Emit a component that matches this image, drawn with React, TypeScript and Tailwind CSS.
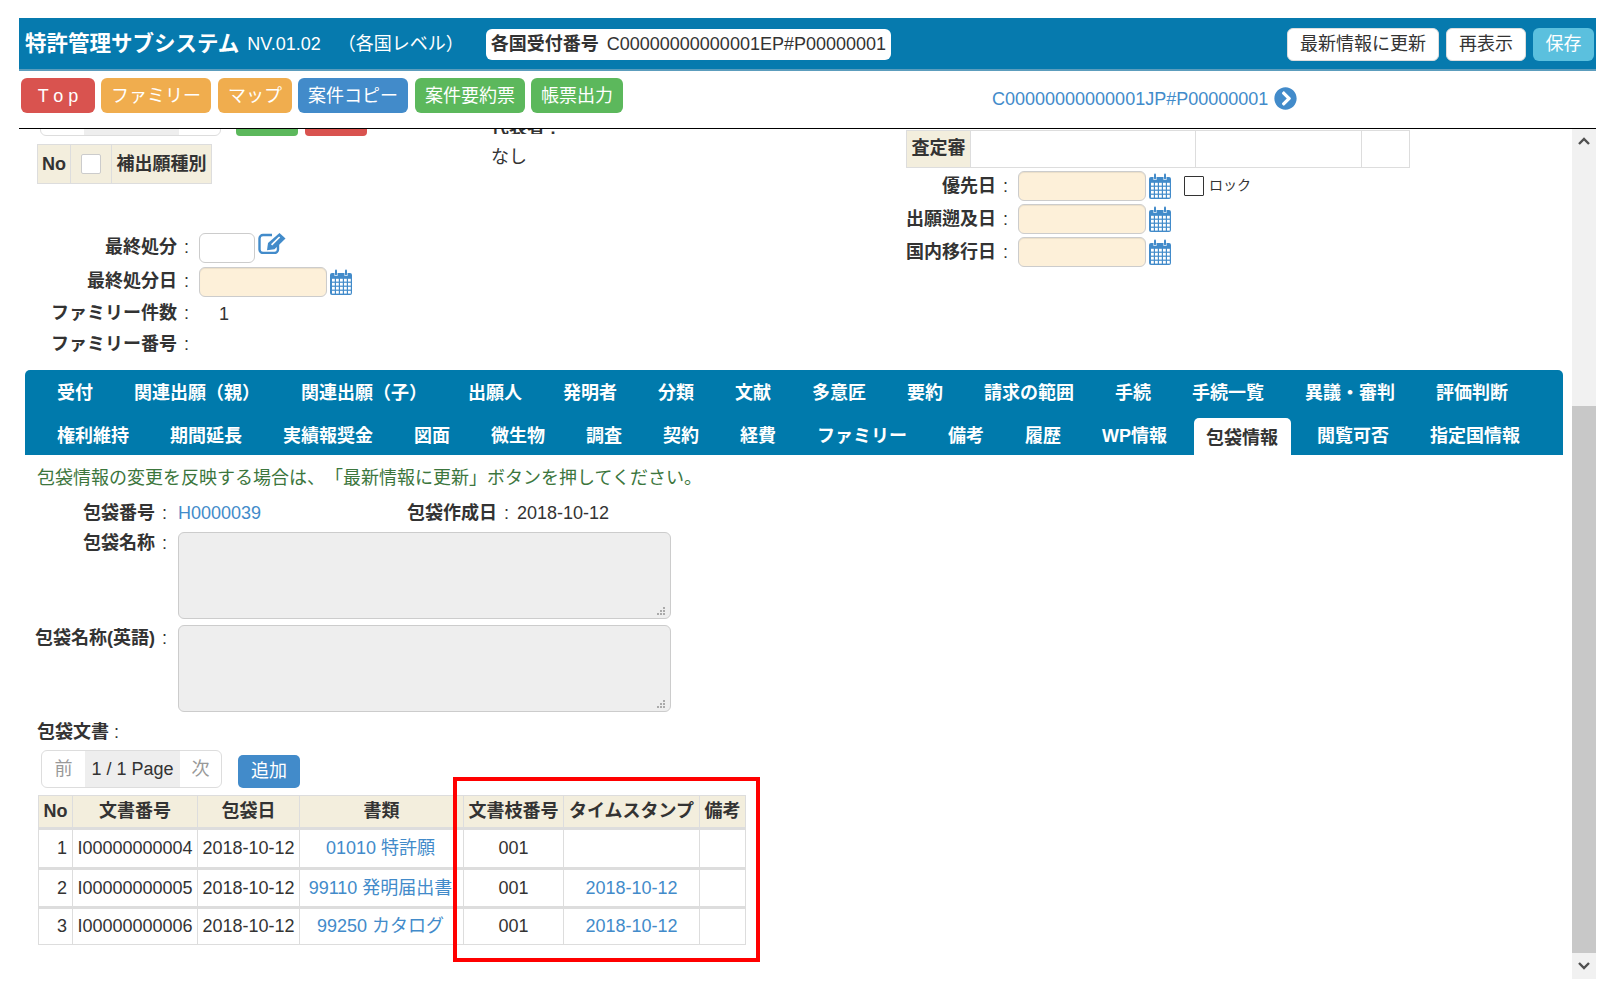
import React from "react";
import { FaChevronCircleRight } from "react-icons/fa";

const Cal = () => (
  <svg viewBox="0 0 22 26" className="w-[22px] h-[26px] shrink-0" aria-hidden>
    <path fill="#428bca" d="M2 4h2.5v3h3V4h7v3h3V4H20a2 2 0 0 1 2 2v18a2 2 0 0 1-2 2H2a2 2 0 0 1-2-2V6a2 2 0 0 1 2-2z" />
    <rect x="5" y="0.5" width="2" height="6" rx="1" fill="#428bca" />
    <rect x="15" y="0.5" width="2" height="6" rx="1" fill="#428bca" />
    <g fill="#fff">
      {[10, 14, 18, 22].map((y) =>
        [2, 6, 10, 14, 18].map((x) => <rect key={`${x}-${y}`} x={x} y={y - 0.2} width="2.8" height="2.8" />)
      )}
    </g>
  </svg>
);

const EditIcon = () => (
  <svg viewBox="0 0 28 22" className="ml-[3px] -mt-[10px] w-[28px] h-[22px] shrink-0" aria-hidden>
    <path d="M14 3H5A3.5 3.5 0 0 0 1.5 6.5v11A3.5 3.5 0 0 0 5 21h11.5a3.5 3.5 0 0 0 3.5-3.5V12" fill="none" stroke="#428bca" strokeWidth="2.4" />
    <path fill="#428bca" d="M21.5 1l6 5.6-11 10.6-7.5 1 1-7.2z" />
    <path fill="#fff" d="M21 4.4l1.2 1.1-8 7.9-1.2-1.1z" />
  </svg>
);

const Grip = () => (
  <svg viewBox="0 0 10 11" className="absolute right-[4px] bottom-[1px] w-[10px] h-[11px]" aria-hidden>
    <g fill="#aaa">
      {[[7, 1], [7, 4], [4, 4], [7, 7], [4, 7], [1, 7]].map(([x, y]) => <rect key={`${x}-${y}`} x={x} y={y} width="2" height="2" />)}
    </g>
  </svg>
);

const btn = "h-[35px] pt-[1px] rounded-[6px] flex items-center justify-center text-white text-[18px] shrink-0";

const DateInput = () => (
  <div className="w-[128px] h-[30px] rounded-[6px] bg-[#fdf0d9] border border-[#ccc] shadow-[inset_0_1px_1px_rgba(0,0,0,0.075)] shrink-0" />
);

const Lab = ({ w, children }: { w: string; children: React.ReactNode }) => (
  <div className={`${w} shrink-0 flex justify-end font-bold text-[#333] whitespace-nowrap`}>
    {children}
    <span className="ml-[7px] font-normal">:</span>
  </div>
);

const Tab = ({ children, active, top }: { children: React.ReactNode; active?: boolean; top?: boolean }) => (
  <div
    className={
      active
        ? "h-[37px] pl-[12px] pr-[13px] pt-[7px] -ml-[2px] -mr-[3px] mt-auto bg-white rounded-t-[5px] text-[#333] font-bold text-[18px] leading-[27px] whitespace-nowrap"
        : top
        ? "h-[37px] px-[12px] pt-[6px] text-white font-bold text-[18px] leading-[27px] whitespace-nowrap"
        : "h-[37px] px-[12px] pt-[5px] text-white font-bold text-[18px] leading-[27px] whitespace-nowrap"
    }
  >
    {children}
  </div>
);

const row1 = ["受付", "関連出願（親）", "関連出願（子）", "出願人", "発明者", "分類", "文献", "多意匠", "要約", "請求の範囲", "手続", "手続一覧", "異議・審判", "評価判断"];
const row2 = ["権利維持", "期間延長", "実績報奨金", "図面", "微生物", "調査", "契約", "経費", "ファミリー", "備考", "履歴", "WP情報", "包袋情報", "閲覧可否", "指定国情報"];

const th = "border border-[#ddd] border-b-[3px] bg-[#f3eedd] font-bold text-center text-[#333] p-0 h-[33px]";
const td = "border border-[#ddd] text-[#333] p-0 text-center whitespace-nowrap";
const link = "text-[#428bca]";

const rows = [
  { n: 1, id: "I00000000004", doc: "01010 特許願", ts: "" },
  { n: 2, id: "I00000000005", doc: "99110 発明届出書", ts: "2018-10-12" },
  { n: 3, id: "I00000000006", doc: "99250 カタログ", ts: "2018-10-12" },
];

export default function App() {
  return (
    <div className="w-[1620px] h-[1000px] bg-white overflow-hidden pt-[18px] pl-[19px] font-['Liberation_Sans','Noto_Sans_CJK_JP',sans-serif] text-[18px] text-[#333] [text-spacing-trim:space-all]">
      <div className="w-[1577px]">
        {/* header */}
        <div className="h-[53px] pt-[1px] bg-[#067aae] border-b-2 border-[#5c9dbd] flex items-center text-white">
          <div className="ml-[6px] text-[21.5px] font-bold whitespace-nowrap">特許管理サブシステム</div>
          <div className="ml-[8px] text-[18px] whitespace-nowrap">NV.01.02</div>
          <div className="ml-[17px] w-[148px] whitespace-nowrap">（各国レベル）</div>
          <div className="w-[405px] h-[31px] bg-white rounded-[6px] flex items-center text-[#333] pl-[5px] whitespace-nowrap">
            <span className="font-bold">各国受付番号</span>
            <span className="ml-[8px]">C00000000000001EP#P00000001</span>
          </div>
          <div className="ml-auto mr-[2px] flex gap-[7px]">
            <div className="w-[152px] h-[33px] bg-white rounded-[6px] border border-[#ddd] text-[#333] flex items-center justify-center">最新情報に更新</div>
            <div className="w-[80px] h-[33px] bg-white rounded-[6px] border border-[#ddd] text-[#333] flex items-center justify-center">再表示</div>
            <div className="w-[61px] h-[33px] bg-[#5bc0de] rounded-[6px] text-white flex items-center justify-center">保存</div>
          </div>
        </div>
        {/* toolbar */}
        <div className="h-[58px] border-b border-black flex pt-[7px] pl-[2px] relative">
          <div className={`${btn} w-[74px] bg-[#d9534f]`}>T o p</div>
          <div className={`${btn} ml-[6px] w-[110px] bg-[#f0ad4e]`}>ファミリー</div>
          <div className={`${btn} ml-[7px] w-[74px] bg-[#f0ad4e]`}>マップ</div>
          <div className={`${btn} ml-[6px] w-[110px] bg-[#428bca]`}>案件コピー</div>
          <div className={`${btn} ml-[7px] w-[110px] bg-[#5cb85c]`}>案件要約票</div>
          <div className={`${btn} ml-[6px] w-[92px] bg-[#5cb85c]`}>帳票出力</div>
          <div className="ml-[369px] mt-[9px] h-[24px] flex items-center whitespace-nowrap text-[#428bca]">
            C00000000000001JP#P00000001
            <FaChevronCircleRight className="ml-[6px] -mt-[1px] w-[23px] h-[23px]" />
          </div>
        </div>
        {/* body */}
        <div className="h-[850px] flex">
          <div className="w-[1553px] h-full overflow-hidden">
            {/* top form */}
            <div className="h-[241px] flex">
              <div className="w-[472px] shrink-0">
                <div className="h-[7px] overflow-hidden flex pl-[21px] items-end">
                  <div className="w-[181px] h-[38px] rounded-[6px] border border-[#ddd] flex shrink-0">
                    <div className="ml-[43px] w-[95px] bg-[#eee]" />
                  </div>
                  <div className="ml-[15px] w-[62px] h-[20px] bg-[#5cb85c] rounded-[4px] shrink-0" />
                  <div className="ml-[7px] w-[62px] h-[20px] bg-[#d9534f] rounded-[4px] shrink-0" />
                </div>
                <div className="mt-[8px] ml-[18px] w-[175px] h-[40px] flex bg-[#f3eedd] border border-[#ddd] font-bold leading-[38px]">
                  <div className="w-[33px] text-center border-r border-[#ddd]">No</div>
                  <div className="w-[41px] border-r border-[#ddd] flex items-center justify-center">
                    <div className="w-[20px] h-[20px] bg-white border border-[#ccc] rounded-[2px]" />
                  </div>
                  <div className="flex-1 text-center whitespace-nowrap">補出願種別</div>
                </div>
                <div className="mt-[49px] flex items-center h-[30px]">
                  <Lab w="w-[170px] -mt-[2px]">最終処分</Lab>
                  <div className="ml-[10px] w-[56px] h-[30px] rounded-[6px] border border-[#ccc] shrink-0" />
                  <EditIcon />
                </div>
                <div className="mt-[4px] flex items-center h-[30px]">
                  <Lab w="w-[170px] -mt-[2px]">最終処分日</Lab>
                  <div className="ml-[10px]"><DateInput /></div>
                  <div className="ml-[3px]"><Cal /></div>
                </div>
                <div className="mt-[2px] flex items-center h-[30px]">
                  <Lab w="w-[170px] -mt-[2px]">ファミリー件数</Lab>
                  <div className="ml-[30px]">1</div>
                </div>
                <div className="mt-[1px] flex items-center h-[30px]">
                  <Lab w="w-[170px] -mt-[2px]">ファミリー番号</Lab>
                </div>
              </div>
              <div className="w-[415px] shrink-0">
                <div className="h-[5px] overflow-hidden">
                  <div className="-mt-[13px] font-bold leading-[24px]">代表者 :</div>
                </div>
                <div className="mt-[10px] leading-[27px]">なし</div>
              </div>
              <div className="flex-1">
                <div className="mt-[1px] w-[504px] h-[38px] flex border border-[#ddd]">
                  <div className="w-[64px] bg-[#f3eedd] font-bold text-center leading-[35px] border-r border-[#ddd]">査定審</div>
                  <div className="w-[225px] border-r border-[#ddd]" />
                  <div className="w-[166px] border-r border-[#ddd]" />
                </div>
                <div className="mt-[3px] flex items-center h-[30px] gap-[3px]">
                  <Lab w="w-[102px]">優先日</Lab>
                  <div className="ml-[7px]"><DateInput /></div>
                  <Cal />
                  <div className="ml-[10px] w-[20px] h-[20px] border border-[#333] rounded-[1px]" />
                  <div className="ml-[2px] text-[14px] -mt-[2px]">ロック</div>
                </div>
                <div className="mt-[3px] flex items-center h-[30px] gap-[3px]">
                  <Lab w="w-[102px]">出願遡及日</Lab>
                  <div className="ml-[7px]"><DateInput /></div>
                  <Cal />
                </div>
                <div className="mt-[3px] flex items-center h-[30px] gap-[3px]">
                  <Lab w="w-[102px]">国内移行日</Lab>
                  <div className="ml-[7px]"><DateInput /></div>
                  <Cal />
                </div>
              </div>
            </div>
            {/* tabs */}
            <div className="ml-[6px] w-[1538px] h-[85px] bg-[#007aac] rounded-t-[5px] pl-[20px] pt-[4px] flex flex-col justify-between">
              <div className="flex gap-x-[17px]">
                {row1.map((t) => <Tab key={t} top>{t}</Tab>)}
              </div>
              <div className="flex gap-x-[17px]">
                {row2.map((t) => <Tab key={t} active={t === "包袋情報"}>{t}</Tab>)}
              </div>
            </div>
            {/* panel */}
            <div className="pl-[18px]">
              <div className="mt-[10px] text-[#3c763d] text-[18px] leading-[27px] whitespace-nowrap">包袋情報の変更を反映する場合は、「最新情報に更新」ボタンを押してください。</div>
              <div className="mt-[8px] flex h-[27px] leading-[27px]">
                <Lab w="w-[130px]">包袋番号</Lab>
                <span className="ml-[11px] w-[229px] text-[#428bca]">H0000039</span>
                <span className="font-bold whitespace-nowrap">包袋作成日</span>
                <span className="ml-[7px]">:</span>
                <span className="ml-[8px]">2018-10-12</span>
              </div>
              <div className="mt-[5px] flex">
                <div className="-mt-[2px]"><Lab w="w-[130px]">包袋名称</Lab></div>
                <div className="ml-[11px] relative w-[493px] h-[87px] bg-[#eee] border border-[#ccc] rounded-[6px]">
                  <Grip />
                </div>
              </div>
              <div className="mt-[6px] flex">
                <Lab w="w-[130px]">包袋名称(英語)</Lab>
                <div className="ml-[11px] relative w-[493px] h-[87px] bg-[#eee] border border-[#ccc] rounded-[6px]">
                  <Grip />
                </div>
              </div>
              <div className="mt-[7px] leading-[27px]"><span className="font-bold">包袋文書</span> :</div>
              <div className="mt-[4px] ml-[4px] flex items-end">
                <div className="w-[181px] h-[38px] rounded-[6px] border border-[#ddd] flex items-center overflow-hidden">
                  <div className="w-[43px] text-center text-[#999]">前</div>
                  <div className="w-[95px] h-full bg-[#eee] flex items-center justify-center whitespace-nowrap">1 / 1 Page</div>
                  <div className="flex-1 text-center text-[#999]">次</div>
                </div>
                <div className="ml-[16px] w-[62px] h-[33px] rounded-[5px] bg-[#428bca] text-white flex items-center justify-center">追加</div>
              </div>
              <div className="relative mt-[7px] ml-[1px] w-[708px]">
                <table className="table-fixed border-collapse w-[707px] text-[18px]">
                  <colgroup>
                    <col className="w-[34px]" />
                    <col className="w-[125px]" />
                    <col className="w-[102px]" />
                    <col className="w-[164px]" />
                    <col className="w-[100px]" />
                    <col className="w-[136px]" />
                    <col className="w-[46px]" />
                  </colgroup>
                  <thead>
                    <tr>
                      {["No", "文書番号", "包袋日", "書類", "文書枝番号", "タイムスタンプ", "備考"].map((h) => (
                        <th key={h} className={`${th} whitespace-nowrap`}>{h}</th>
                      ))}
                    </tr>
                  </thead>
                  <tbody>
                    {rows.map((r, i) => (
                      <tr key={r.n} className={i === 0 ? "h-[40px]" : i === 1 ? "h-[39px]" : "h-[37px]"}>
                        <td className={`${td} text-right pr-[5px] ${i < 2 ? "border-b-[3px]" : ""}`}>{r.n}</td>
                        <td className={`${td} ${i < 2 ? "border-b-[3px]" : ""}`}>{r.id}</td>
                        <td className={`${td} ${i < 2 ? "border-b-[3px]" : ""}`}>2018-10-12</td>
                        <td className={`${td} pr-[2px] ${link} ${i < 2 ? "border-b-[3px]" : ""}`}>{r.doc}</td>
                        <td className={`${td} ${i < 2 ? "border-b-[3px]" : ""}`}>001</td>
                        <td className={`${td} ${link} ${i < 2 ? "border-b-[3px]" : ""}`}>{r.ts}</td>
                        <td className={`${td} ${i < 2 ? "border-b-[3px]" : ""}`}></td>
                      </tr>
                    ))}
                  </tbody>
                </table>
                <div className="absolute left-[415px] -top-[18px] w-[307px] h-[185px] border-4 border-[#ff0000]" />
              </div>
            </div>
          </div>
          {/* scrollbar */}
          <div className="w-[24px] h-full bg-[#f1f1f1] flex flex-col items-center">
            <div className="h-[277px] w-full pt-[8px] flex justify-center items-start">
              <svg viewBox="0 0 12 8" className="w-[12px] h-[8px]"><path d="M1 7l5-5 5 5" fill="none" stroke="#505050" strokeWidth="2.4" /></svg>
            </div>
            <div className="w-full h-[547px] bg-[#c8c8c8]" />
            <div className="flex-1 w-full flex justify-center items-center">
              <svg viewBox="0 0 12 8" className="w-[12px] h-[8px]"><path d="M1 1l5 5 5-5" fill="none" stroke="#505050" strokeWidth="2.4" /></svg>
            </div>
          </div>
        </div>
      </div>
    </div>
  );
}
